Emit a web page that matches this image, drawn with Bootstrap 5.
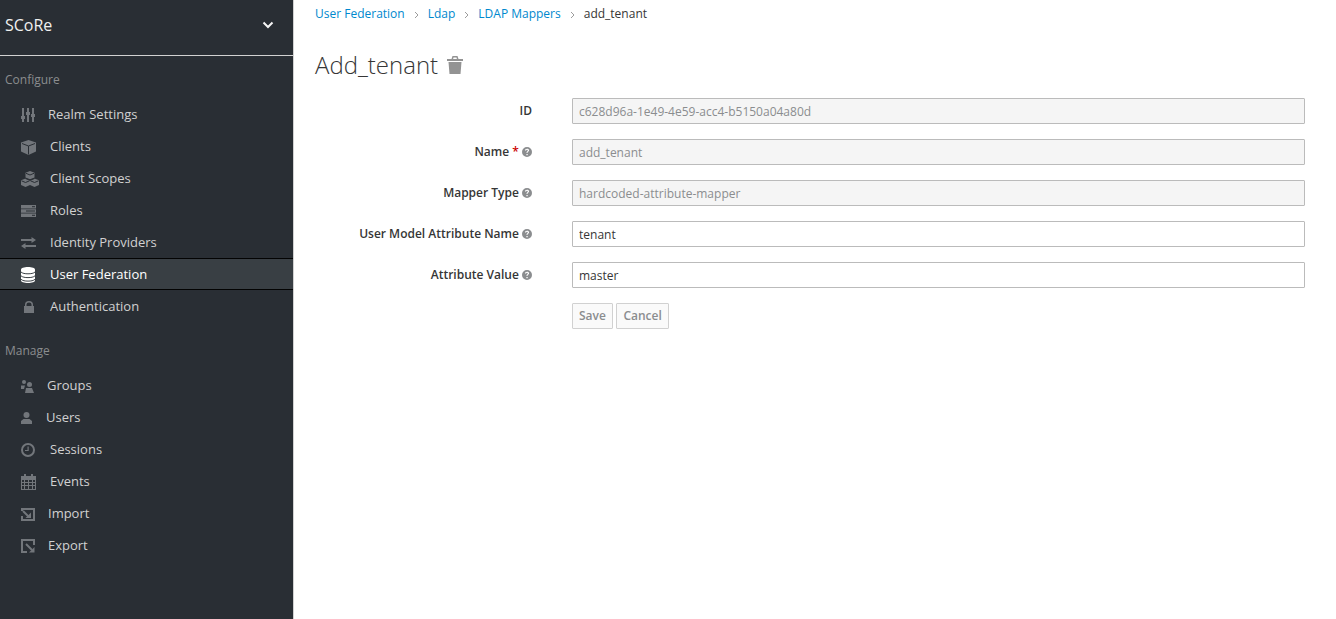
<!DOCTYPE html>
<html lang="en">
<head>
<meta charset="UTF-8">
<title>Add_tenant</title>
<link href="https://cdn.jsdelivr.net/npm/bootstrap@5.3.0/dist/css/bootstrap.min.css" rel="stylesheet">
<style>
html, body { height: 100%; }
body { font-family: "Open Sans", "Liberation Sans", sans-serif; font-size: 12px; color: #363636; background: #fff; overflow: hidden; }
.shell { height: 619px; }
.side { width: 294px; flex: none; background: #292e34; border-right: 1px solid #d1d1d1; }
.realm { height: 56px; padding: 0 19px 6px 5px; color: #f0f0f0; font-size: 16px; border-bottom: 1px solid #d1d1d1; }
.realm svg { width: 12px; height: 8px; fill: none; stroke: #f5f5f5; stroke-width: 2; }
.group-title { color: #8b8d8f; font-size: 12px; line-height: 16px; padding-left: 5px; margin: 16px 0 10px; }
.group-title.second { margin: 21px 0 10px; }
.side-link { height: 32px; padding: 2px 0 0 21px; color: #d1d1d1; font-size: 13px; text-decoration: none; border-top: 1px solid transparent; border-bottom: 1px solid transparent; }
.side-link.on { background: #393f44; border-color: #030303; color: #fff; }
.side-link svg { flex: none; fill: #72767b; display: block; }
.side-link.on svg { fill: #fff; }
.ic-27 { width: 27px; } .ic-29 { width: 29px; } .ic-26 { width: 26px; } .ic-25 { width: 25px; }
.lock-ic { margin-left: 3px; }
.cut { fill: none; stroke: #292e34; }
.cut-on { fill: none; stroke: #393f44; }
.main-pane { padding: 0 31px 0 21px; }
.crumbs { padding-top: 6px; height: 46px; font-size: 12px; line-height: 16px; }
.crumbs a { color: #0088ce; text-decoration: none; }
.crumb-sep { width: 23px; text-align: center; }
.crumb-sep svg { width: 5px; height: 8px; fill: none; stroke: #9c9c9c; stroke-width: 1; }
.page-head { font-size: 24px; font-weight: 300; line-height: 28px; margin: 0 0 19px; padding-top: 5px; color: #363636; }
.page-head svg { width: 16px; height: 18px; fill: #939393; margin-left: 9px; }
.field { margin-bottom: 15px; }
.field-label { width: 217px; flex: none; text-align: right; font-weight: 600; font-size: 12px; margin: 0 40px 0 0; color: #363636; }
.field-label .req { color: #c00; }
.field-label svg { width: 10px; height: 10px; fill: #8b8d8f; vertical-align: -1px; }
.field .form-control { height: 26px; padding: 2px 6px; font-size: 12px; line-height: 20px; border: 1px solid #bbb; border-radius: 1px; color: #363636; }
.field .form-control:disabled { background: #f5f5f5; color: #8b8d8f; opacity: 1; }
.act { margin-left: 257px; gap: 3px; }
.act .btn { height: 26px; padding: 0 6px; font-size: 12px; font-weight: 600; line-height: 24px; color: #8b8d8f; background: #fafafa; border: 1px solid #d1d1d1; border-radius: 1px; opacity: 1; }
.act .btn + .btn { padding: 0 6.5px; }
</style>
</head>
<body>
<div class="shell d-flex">
  <nav class="side d-flex flex-column">
    <div class="realm d-flex align-items-center justify-content-between">
      <span>SCoRe</span>
      <svg viewBox="0 0 12 8"><path d="M1.500 1.500 6 6l4.500-4.500"/></svg>
    </div>
    <div class="group-title">Configure</div>
    <a class="side-link d-flex align-items-center" href="#"><span class="ic-27"><svg width="14" height="14" viewBox="0 0 14 14"><path d="M1 0h2v14H1zM6 0h2v14H6zM11 0h2v14h-2zM0 8h4v3H0zM5 4h4v3H5zM10 6h4v3h-4z"/></svg></span>Realm Settings</a>
    <a class="side-link d-flex align-items-center" href="#"><span class="ic-29"><svg width="15" height="15" viewBox="0 0 15 15"><path d="M7.500 0 15 2.500v9L7.500 15 0 11.500v-9z"/><path class="cut" d="M1 3.500l6.500 2.500L14 3.500M7.500 6v8.500"/></svg></span>Clients</a>
    <a class="side-link d-flex align-items-center" href="#"><span class="ic-29"><svg width="18" height="16" viewBox="0 0 18 16"><path d="M9 0l4.500 1.800v4.700L9 8.300 4.500 6.500V1.800zM4.500 7.500 9 9.300V14l-4.500 2L0 14V9.300zM13.500 7.500 18 9.300V14l-4.500 2L9 14V9.300z"/><path class="cut" d="M5 2.300 9 4l4-1.700M.5 9.800l4 1.700 4-1.700M9.500 9.800l4 1.700 4-1.700M4.500 7.500 9 9.300l4.500-1.800"/></svg></span>Client Scopes</a>
    <a class="side-link d-flex align-items-center" href="#"><span class="ic-29"><svg width="15" height="12" viewBox="0 0 15 12"><path d="M0 0h15v3.500H0zM0 4.300h15v3.400H0zM0 8.500h15V12H0z"/><path class="cut" d="M11 1.700h3M5 6h9M11 10.300h3"/></svg></span>Roles</a>
    <a class="side-link d-flex align-items-center" href="#"><span class="ic-29"><svg width="15" height="12" viewBox="0 0 15 12"><path d="M0 2h10.500V0L15 3l-4.500 3V4H0zM15 8H4.500V6L0 9l4.500 3v-2H15z"/></svg></span>Identity Providers</a>
    <a class="side-link on d-flex align-items-center" href="#"><span class="ic-29"><svg width="14" height="16" viewBox="0 0 14 16"><path d="M7 0c4 0 7 1 7 2.500v11C14 15 11 16 7 16s-7-1-7-2.500v-11C0 1 3 0 7 0z"/><path class="cut-on" d="M0 5c1.500 1.400 4 1.800 7 1.800S12.500 6.400 14 5M0 8.800c1.500 1.400 4 1.800 7 1.800s5.500-.4 7-1.800M0 12.300c1.500 1.400 4 1.800 7 1.800s5.500-.4 7-1.800"/></svg></span>User Federation</a>
    <a class="side-link d-flex align-items-center" href="#"><span class="ic-29"><svg class="lock-ic" width="10" height="12" viewBox="0 0 10 12"><path fill-rule="evenodd" d="M0 5h1V3.500a4 3.500 0 0 1 8 0V5h1v7H0zM2.500 5h5V3.500a2.500 2 0 0 0-5 0z"/></svg></span>Authentication</a>
    <div class="group-title second">Manage</div>
    <a class="side-link d-flex align-items-center" href="#"><span class="ic-26"><svg width="13" height="13" viewBox="0 0 13 13"><circle cx="3" cy="2" r="2"/><circle cx="8.500" cy="4.500" r="2.500"/><path d="M0 5.500h4L3 9H0zM4 13l1-5h6l2 5z"/></svg></span>Groups</a>
    <a class="side-link d-flex align-items-center" href="#"><span class="ic-25"><svg width="11" height="12" viewBox="0 0 11 12"><circle cx="5.500" cy="3" r="3"/><path d="M0 12V9l2.500-2h6L11 9v3z"/></svg></span>Users</a>
    <a class="side-link d-flex align-items-center" href="#"><span class="ic-29"><svg width="14" height="14" viewBox="0 0 14 14"><path fill-rule="evenodd" d="M7 0a7 7 0 1 1 0 14A7 7 0 0 1 7 0zm0 2a5 5 0 1 0 0 10A5 5 0 0 0 7 2zM6.500 3.500h1.200V8H4V7h2.500z"/></svg></span>Sessions</a>
    <a class="side-link d-flex align-items-center" href="#"><span class="ic-29"><svg width="15" height="16" viewBox="0 0 15 16"><path fill-rule="evenodd" d="M0 2h3V0h2v2h5V0h2v2h3v14H0zM1 6v2h2V6zm3 0v2h3V6zm4 0v2h3V6zm4 0v2h2V6zM1 9v2h2V9zm3 0v2h3V9zm4 0v2h3V9zm4 0v2h2V9zM1 12v3h2v-3zm3 0v3h3v-3zm4 0v3h3v-3zm4 0v3h2v-3z"/></svg></span>Events</a>
    <a class="side-link d-flex align-items-center" href="#"><span class="ic-27"><svg width="14" height="13" viewBox="0 0 14 13"><path fill="none" stroke="#72767b" stroke-width="2" d="M1 3V1h12v11H1V8"/><path fill="none" stroke="#72767b" stroke-width="2" d="M2 3l6 6"/><path d="M10 4.500V10H4.500z"/></svg></span>Import</a>
    <a class="side-link d-flex align-items-center" href="#"><span class="ic-27"><svg width="14" height="14" viewBox="0 0 14 14"><path fill="none" stroke="#72767b" stroke-width="2" d="M6 13H1V1h12v5"/><path fill="none" stroke="#72767b" stroke-width="2" d="M5 5l6 6"/><path d="M13.500 8v5.500H8z"/></svg></span>Export</a>
  </nav>
  <main class="main-pane flex-grow-1">
    <div class="crumbs d-flex align-items-start">
      <a href="#">User Federation</a>
      <span class="crumb-sep"><svg viewBox="0 0 5 8"><path d="M1 1l3 3-3 3"/></svg></span>
      <a href="#">Ldap</a>
      <span class="crumb-sep"><svg viewBox="0 0 5 8"><path d="M1 1l3 3-3 3"/></svg></span>
      <a href="#">LDAP Mappers</a>
      <span class="crumb-sep"><svg viewBox="0 0 5 8"><path d="M1 1l3 3-3 3"/></svg></span>
      <span>add_tenant</span>
    </div>
    <h1 class="page-head d-flex align-items-center">Add_tenant<svg viewBox="0 0 16 18"><path fill-rule="evenodd" d="M0 3h4.500l1-3h5l1 3H16v2H0zM6.500 1.500 6.100 3h3.800l-.4-1.500zM1.500 6h13l-1 12h-11z"/></svg></h1>
    <form>
      <div class="field d-flex align-items-center">
        <label class="field-label">ID</label>
        <input class="form-control" disabled value="c628d96a-1e49-4e59-acc4-b5150a04a80d">
      </div>
      <div class="field d-flex align-items-center">
        <label class="field-label">Name <span class="req">*</span> <svg viewBox="0 0 10 10"><path fill-rule="evenodd" d="M5 0a5 5 0 1 1 0 10A5 5 0 0 1 5 0zM4.400 7v1.300h1.300V7zM5 1.700c-1.200 0-2 .7-2.100 1.800h1.200c.1-.5.400-.8.900-.8s.8.300.8.700c0 .8-1.400.9-1.400 2.200v.2h1.300c0-1 1.400-1.200 1.400-2.500 0-1-.8-1.600-2.100-1.600z"/></svg></label>
        <input class="form-control" disabled value="add_tenant">
      </div>
      <div class="field d-flex align-items-center">
        <label class="field-label">Mapper Type <svg viewBox="0 0 10 10"><path fill-rule="evenodd" d="M5 0a5 5 0 1 1 0 10A5 5 0 0 1 5 0zM4.400 7v1.300h1.300V7zM5 1.700c-1.200 0-2 .7-2.100 1.800h1.200c.1-.5.400-.8.900-.8s.8.300.8.700c0 .8-1.400.9-1.400 2.200v.2h1.300c0-1 1.400-1.200 1.400-2.500 0-1-.8-1.600-2.100-1.600z"/></svg></label>
        <input class="form-control" disabled value="hardcoded-attribute-mapper">
      </div>
      <div class="field d-flex align-items-center">
        <label class="field-label">User Model Attribute Name <svg viewBox="0 0 10 10"><path fill-rule="evenodd" d="M5 0a5 5 0 1 1 0 10A5 5 0 0 1 5 0zM4.400 7v1.300h1.300V7zM5 1.700c-1.200 0-2 .7-2.100 1.800h1.200c.1-.5.400-.8.900-.8s.8.300.8.700c0 .8-1.400.9-1.400 2.200v.2h1.300c0-1 1.400-1.200 1.400-2.500 0-1-.8-1.600-2.100-1.600z"/></svg></label>
        <input class="form-control" value="tenant">
      </div>
      <div class="field d-flex align-items-center">
        <label class="field-label">Attribute Value <svg viewBox="0 0 10 10"><path fill-rule="evenodd" d="M5 0a5 5 0 1 1 0 10A5 5 0 0 1 5 0zM4.400 7v1.300h1.300V7zM5 1.700c-1.200 0-2 .7-2.100 1.800h1.200c.1-.5.400-.8.900-.8s.8.300.8.700c0 .8-1.400.9-1.400 2.200v.2h1.300c0-1 1.400-1.200 1.400-2.500 0-1-.8-1.600-2.100-1.600z"/></svg></label>
        <input class="form-control" value="master">
      </div>
      <div class="act d-flex">
        <button type="button" class="btn" disabled>Save</button>
        <button type="button" class="btn" disabled>Cancel</button>
      </div>
    </form>
  </main>
</div>
<script src="https://cdn.jsdelivr.net/npm/bootstrap@5.3.0/dist/js/bootstrap.bundle.min.js"></script>
</body>
</html>
